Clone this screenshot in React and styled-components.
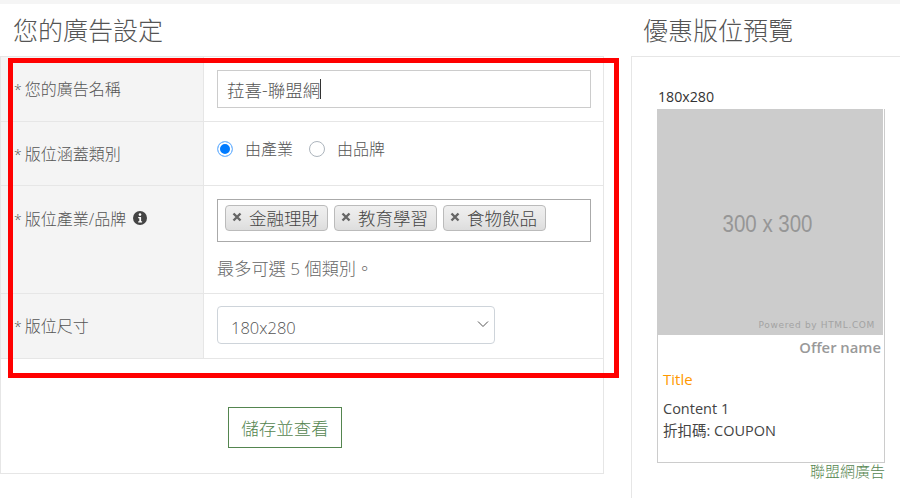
import React from 'react';
import styled, {createGlobalStyle} from 'styled-components';

const GlobalStyle = createGlobalStyle`
  html, body {
    margin: 0;
    padding: 0;
    background: #fff;
    overflow: hidden;
  }
  * {
    box-sizing: border-box;
  }
  body {
    font-family: "Open Sans", "Noto Sans CJK TC", sans-serif;
    color: #555;
  }
`;

const Page = styled.div`
  position: relative;
  width: 900px;
  height: 498px;
  overflow: hidden;
  display: flex;
  border-top: 4px solid #f5f5f5;
`;

const LeftColumn = styled.section`
  width: 604px;
  flex: none;
`;

const RightColumn = styled.section`
  width: 269px;
  margin-left: 27px;
  flex: none;
`;

const Heading = styled.h2`
  margin: 0;
  height: 52px;
  padding-left: ${props => props.$indent}px;
  font-size: 25px;
  font-weight: 300;
  line-height: 52px;
  color: #555;
`;

const FormCard = styled.div`
  height: 418px;
  border: 1px solid #e6e6e6;
`;

const Row = styled.div`
  display: flex;
  height: ${props => props.$height}px;
  border-bottom: 1px solid #e6e6e6;
`;

const Label = styled.div`
  display: flex;
  align-items: ${props => (props.$top ? 'flex-start' : 'center')};
  gap: 7px;
  width: 203px;
  flex: none;
  padding: ${props => (props.$top ? '20px' : '0')} 0 ${props => (props.$top ? '0' : '2px')} 13px;
  background: #f4f4f4;
  border-right: 1px solid #e6e6e6;
  font-size: 16px;
  font-weight: 300;
  color: #555;
`;

const Asterisk = styled.span`
  margin-right: 3px;
  font-size: 14px;
`;

const Field = styled.div`
  flex: 1;
  padding: ${props => props.$pad}px 13px 0 13px;
`;

const TextInput = styled.div`
  display: flex;
  align-items: center;
  width: 374px;
  height: 38px;
  padding-left: 9px;
  border: 1px solid #ccc;
  font-size: 17.5px;
  font-weight: 300;
  color: #555;
`;

const Caret = styled.span`
  width: 1px;
  height: 20px;
  background: #333;
`;

const RadioRow = styled.div`
  display: flex;
  align-items: center;
  font-size: 16px;
  font-weight: 300;
`;

const Radio = styled.span`
  width: 16px;
  height: 16px;
  margin-right: 12px;
  border-radius: 50%;
  border: ${props => (props.$checked ? '1px solid #80bdff' : '1px solid #adb5bd')};
  background: ${props => (props.$checked ? '#007bff' : '#fff')};
  box-shadow: ${props => (props.$checked ? 'inset 0 0 0 2px #fff' : 'none')};
`;

const RadioText = styled.span`
  margin-right: ${props => props.$gap}px;
  margin-top: -1px;
`;

const TagBox = styled.div`
  display: flex;
  align-items: flex-start;
  gap: 6px;
  width: 374px;
  height: 43px;
  padding: 5px 7px;
  border: 1px solid #aaa;
`;

const Tag = styled.span`
  display: flex;
  align-items: center;
  height: 26px;
  padding: 0 8px 2px 6px;
  border: 1px solid #bbb;
  border-radius: 4px;
  background: linear-gradient(#f0f0f0, #e6e6e6 60%, #ddd);
  font-size: 17.5px;
  font-weight: 300;
  color: #444;
`;

const TagClose = styled.svg`
  width: 10px;
  height: 10px;
  margin-right: 7px;
`;

const Hint = styled.p`
  margin: 16px 0 0;
  font-size: 17.2px;
  font-weight: 300;
  line-height: 22px;
  color: #666;
`;

const SelectBox = styled.div`
  display: flex;
  align-items: center;
  justify-content: space-between;
  width: 278px;
  height: 38px;
  padding: 0 4px 0 13px;
  border: 1px solid #ced4da;
  border-radius: 4px;
  font-size: 16.5px;
  font-weight: 300;
  color: #555;
`;

const SelectValue = styled.span`
  padding-top: 4px;
`;

const SelectArrow = styled.svg`
  width: 14px;
  height: 14px;
  margin-bottom: 3px;
`;

const ButtonRow = styled.div`
  display: flex;
  padding: 48px 0 0 227px;
`;

const SaveButton = styled.button`
  width: 114px;
  height: 41px;
  padding: 0;
  border: 1px solid #54854f;
  background: #fff;
  font-family: inherit;
  font-size: 17.5px;
  font-weight: 300;
  color: #54854f;
`;

const PreviewCard = styled.div`
  height: 442px;
  padding: 31px 15px 0 25px;
  border-top: 1px solid #e6e6e6;
  border-left: 1px solid #e6e6e6;
`;

const SizeLabel = styled.div`
  height: 21px;
  padding-left: 1px;
  font-size: 14.2px;
  line-height: 18px;
  color: #333;
`;

const Ad = styled.div`
  width: 228px;
  height: 354px;
  border: 1px solid #ccc;
  border-top: 0;
`;

const Placeholder = styled.div`
  position: relative;
  display: flex;
  align-items: center;
  justify-content: center;
  width: 225px;
  height: 226px;
  padding: 4px 5px 0 0;
  background: #ccc;
  font-family: "Liberation Sans", sans-serif;
  font-size: 23px;
  color: #969696;
`;

const PlaceholderText = styled.span`
  transform: scaleX(0.89);
`;

const PoweredBy = styled.span`
  position: absolute;
  right: 8px;
  bottom: 5px;
  font-family: "DejaVu Sans", sans-serif;
  font-size: 9px;
  letter-spacing: 0.65px;
  color: #a3a3a3;
`;

const OfferName = styled.div`
  padding-right: 3px;
  text-align: right;
  font-size: 14.8px;
  font-weight: 600;
  line-height: 25px;
  color: #999;
`;

const OfferTitle = styled.div`
  margin-top: 8px;
  padding-left: 5px;
  font-size: 15px;
  line-height: 22px;
  color: #f90;
`;

const OfferText = styled.div`
  margin-top: 8px;
  padding-left: 5px;
  font-size: 14.5px;
  line-height: 22px;
  color: #444;
`;

const AdFooter = styled.div`
  width: 228px;
  text-align: right;
  font-size: 15px;
  line-height: 17px;
  font-weight: 300;
  color: #54854f;
`;

const Highlight = styled.div`
  position: absolute;
  left: 8px;
  top: 54px;
  width: 611px;
  height: 320px;
  border: 5px solid #f00;
  pointer-events: none;
`;

const InfoGlyph = styled.svg`
  width: 14px;
  height: 14px;
  margin-top: 5px;
`;

const CloseIcon = () => (
  <TagClose viewBox="0 0 10 10">
    <path d="M1.5 1.5l7 7M8.5 1.5l-7 7" stroke="#666" strokeWidth="2.4" />
  </TagClose>
);

const InfoIcon = () => (
  <InfoGlyph viewBox="0 0 14 14">
    <circle cx="7" cy="7" r="7" fill="#444" />
    <circle cx="7" cy="3.6" r="1.3" fill="#fff" />
    <path d="M5.2 6h2.9v4.2h1v1.2H5.2v-1.2h1.1V7.2H5.2z" fill="#fff" />
  </InfoGlyph>
);

const Chevron = () => (
  <SelectArrow viewBox="0 0 14 14">
    <path d="M2 4.5l5 5 5-5" fill="none" stroke="#555" strokeWidth="1" />
  </SelectArrow>
);

const tags = ['金融理財', '教育學習', '食物飲品'];

const App = () => {
  return (
    <Page>
      <GlobalStyle />
      <LeftColumn>
        <Heading $indent={13}>您的廣告設定</Heading>
        <FormCard>
          <Row $height={65}>
            <Label>
              <span>
                <Asterisk>*</Asterisk>您的廣告名稱
              </span>
            </Label>
            <Field $pad={13}>
              <TextInput>
                菈喜-聯盟網
                <Caret />
              </TextInput>
            </Field>
          </Row>
          <Row $height={64}>
            <Label>
              <span>
                <Asterisk>*</Asterisk>版位涵蓋類別
              </span>
            </Label>
            <Field $pad={15}>
              <RadioRow>
                <Radio $checked />
                <RadioText $gap={16}>由產業</RadioText>
                <Radio />
                <RadioText>由品牌</RadioText>
              </RadioRow>
            </Field>
          </Row>
          <Row $height={108}>
            <Label $top>
              <span>
                <Asterisk>*</Asterisk>版位產業/品牌
              </span>
              <InfoIcon />
            </Label>
            <Field $pad={13}>
              <TagBox>
                {tags.map(tag => (
                  <Tag key={tag}>
                    <CloseIcon />
                    {tag}
                  </Tag>
                ))}
              </TagBox>
              <Hint>最多可選 5 個類別。</Hint>
            </Field>
          </Row>
          <Row $height={65}>
            <Label>
              <span>
                <Asterisk>*</Asterisk>版位尺寸
              </span>
            </Label>
            <Field $pad={12}>
              <SelectBox>
                <SelectValue>180x280</SelectValue>
                <Chevron />
              </SelectBox>
            </Field>
          </Row>
          <ButtonRow>
            <SaveButton type="button">儲存並查看</SaveButton>
          </ButtonRow>
        </FormCard>
      </LeftColumn>
      <RightColumn>
        <Heading $indent={12}>優惠版位預覽</Heading>
        <PreviewCard>
          <SizeLabel>180x280</SizeLabel>
          <Ad>
            <Placeholder>
              <PlaceholderText>300 x 300</PlaceholderText>
              <PoweredBy>Powered by HTML.COM</PoweredBy>
            </Placeholder>
            <OfferName>Offer name</OfferName>
            <OfferTitle>Title</OfferTitle>
            <OfferText>
              Content 1
              <br />
              折扣碼: COUPON
            </OfferText>
          </Ad>
          <AdFooter>聯盟網廣告</AdFooter>
        </PreviewCard>
      </RightColumn>
      <Highlight />
    </Page>
  );
};

export default App;
